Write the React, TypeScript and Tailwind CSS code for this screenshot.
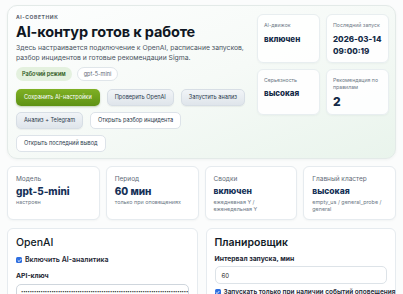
import React from 'react';

const font = { fontFamily: 'Inter, "Noto Sans", sans-serif' };

const HeroStat = ({ label, value, big, wrap }: { label: string; value: React.ReactNode; big?: boolean; wrap?: boolean }) => (
  <div className="rounded-[6px] bg-white/90 border border-[#e8eef0] px-[6px] pt-[7px] pb-[5px] shadow-[0_1px_2px_rgba(15,40,60,0.04)]">
    <p className={`text-[5.2px] leading-[7.5px] text-[#6b7785] ${wrap ? '' : 'whitespace-nowrap'}`}>{label}</p>
    <p className={`mt-[3px] font-extrabold text-[#142a47] ${big ? 'text-[12px] leading-[14px]' : 'text-[8px] leading-[12px]'}`}>{value}</p>
  </div>
);

const Stat = ({ label, value, sub, small }: { label: string; value: string; sub: React.ReactNode; small?: boolean }) => (
  <div className="rounded-[6px] bg-white border border-[#e6ebef] px-[8px] pt-[8px] pb-[6px] shadow-[0_1px_2px_rgba(15,40,60,0.04)]">
    <p className="text-[6.5px] leading-[8px] text-[#5f6b78]">{label}</p>
    <p className={`mt-[2px] font-extrabold text-[#163157] ${small ? 'text-[8.5px] leading-[13px]' : 'text-[10px] leading-[13px]'}`}>{value}</p>
    <p className="mt-[1px] text-[5.4px] leading-[7px] text-[#6b7785]">{sub}</p>
  </div>
);

const Check = () => (
  <span className="w-[6px] h-[6px] rounded-[1.5px] bg-[#2f6fe0] flex items-center justify-center shrink-0">
    <svg viewBox="0 0 10 10" className="w-[5px] h-[5px]">
      <path d="M2 5.2 L4.2 7.3 L8 2.8" stroke="white" strokeWidth="1.8" fill="none" strokeLinecap="round" strokeLinejoin="round" />
    </svg>
  </span>
);

const btnGray = 'h-[17px] px-[7px] rounded-[5px] text-[5.6px] text-[#2a3a4c] bg-gradient-to-b from-[#f1f4f7] to-[#dfe5eb] border border-[#d7dee5] shadow-[0_1px_1px_rgba(0,0,0,0.05)] flex items-center';
const btnWhite = 'h-[17px] px-[7px] rounded-[5px] text-[5.6px] text-[#2a3a4c] bg-white border border-[#dde3e9] flex items-center';

export default function App() {
  return (
    <div style={font} className="w-[403px] h-[294px] overflow-hidden bg-[#fbfcfc] px-[7px] pt-[5px]">
      {/* hero */}
      <div className="rounded-[10px] border border-[#e3eae8] bg-gradient-to-br from-[#fdfefe] via-[#f6faf7] to-[#e9f4ec] flex pl-[8px] pr-[6px] pt-[7px] pb-[6px] shadow-[0_1px_3px_rgba(20,50,40,0.05)]">
        <div className="flex-1 min-w-0">
          <p className="text-[5px] leading-[8px] font-bold tracking-[0.12em] text-[#56606b] uppercase">AI-советник</p>
          <h1 className="mt-[1px] text-[14.5px] leading-[20px] font-bold text-[#0f1723] tracking-[-0.01em]">AI-контур готов к работе</h1>
          <p className="mt-[1px] w-[228px] text-[6.8px] leading-[9.5px] text-[#4a5562]">
            Здесь настраивается подключение к OpenAI, расписание запусков, разбор инцидентов и готовые рекомендации Sigma.
          </p>
          <div className="mt-[5px] flex gap-[5px]">
            <span className="h-[14px] px-[6px] rounded-full bg-[#e4f1df] text-[5.5px] font-semibold text-[#2f5a1c] flex items-center">Рабочий режим</span>
            <span className="h-[14px] px-[6px] rounded-full bg-white border border-[#e0e6ea] text-[5.5px] text-[#5d6873] flex items-center">gpt-5-mini</span>
          </div>
          <div className="mt-[8px] flex flex-wrap gap-x-[7px] gap-y-[6px] w-[236px]">
            <span className="h-[17px] px-[8px] rounded-[5px] text-[5.6px] text-white bg-gradient-to-b from-[#7fb024] to-[#5e9214] shadow-[0_1px_2px_rgba(60,100,10,0.3)] flex items-center">Сохранить AI-настройки</span>
            <span className={btnGray}>Проверить OpenAI</span>
            <span className={btnGray}>Запустить анализ</span>
            <span className={btnGray}>Анализ + Telegram</span>
            <span className={btnWhite}>Открыть разбор инцидента</span>
            <span className={btnWhite}>Открыть последний вывод</span>
          </div>
        </div>
        <div className="w-[132px] shrink-0 grid grid-cols-2 gap-[6px] self-start mt-[1px]">
          <HeroStat label="AI-движок" value="включен" />
          <HeroStat label="Последний запуск" value={<>2026-03-14<br />09:00:19</>} />
          <HeroStat label="Серьезность" value="высокая" />
          <HeroStat label="Рекомендация по правилам" value="2" big wrap />
        </div>
      </div>

      {/* stats */}
      <div className="mt-[7px] grid grid-cols-4 gap-[6px]">
        <Stat label="Модель" value="gpt-5-mini" sub="настроен" />
        <Stat label="Период" value="60 мин" sub="только при оповещениях" />
        <Stat label="Сводки" value="включен" sub={<>ежедневная Y /<br />еженедельная Y</>} small />
        <Stat label="Главный кластер" value="высокая" sub={<>empty_us / general_probe /<br />general</>} small />
      </div>

      {/* panels */}
      <div className="mt-[8px] grid grid-cols-2 gap-[8px]">
        <div className="rounded-[6px] bg-white border border-[#e6ebef] px-[8px] pt-[7px] h-[80px]">
          <h2 className="text-[10.5px] leading-[13px] font-medium text-[#111a26]">OpenAI</h2>
          <label className="mt-[7px] flex items-center gap-[3px] text-[7px] leading-[8px] font-semibold text-[#1c2633]">
            <Check />
            Включить AI-аналитика
          </label>
          <p className="mt-[8px] text-[6.8px] leading-[8px] font-bold text-[#1c2633]">API-ключ</p>
          <div className="mt-[4px] h-[16px] rounded-[5px] border border-[#cfd6dd] px-[4px] flex items-center overflow-hidden">
            <span className="text-[4px] tracking-[-0.02em] text-[#222] whitespace-nowrap">{'•'.repeat(110)}</span>
          </div>
        </div>
        <div className="rounded-[6px] bg-white border border-[#e6ebef] px-[8px] pt-[7px] h-[80px]">
          <h2 className="text-[10.5px] leading-[13px] font-semibold text-[#111a26]">Планировщик</h2>
          <p className="mt-[6px] text-[6.8px] leading-[8px] font-bold text-[#1c2633]">Интервал запуска, мин</p>
          <div className="mt-[3px] h-[18px] rounded-[5px] border border-[#dde3e8] px-[6px] flex items-center text-[6px] text-[#222]">60</div>
          <label className="mt-[4px] flex items-center gap-[3px] text-[6.5px] leading-[8px] font-semibold text-[#1c2633] whitespace-nowrap">
            <Check />
            Запускать только при наличии событий оповещения
          </label>
        </div>
      </div>
    </div>
  );
}
